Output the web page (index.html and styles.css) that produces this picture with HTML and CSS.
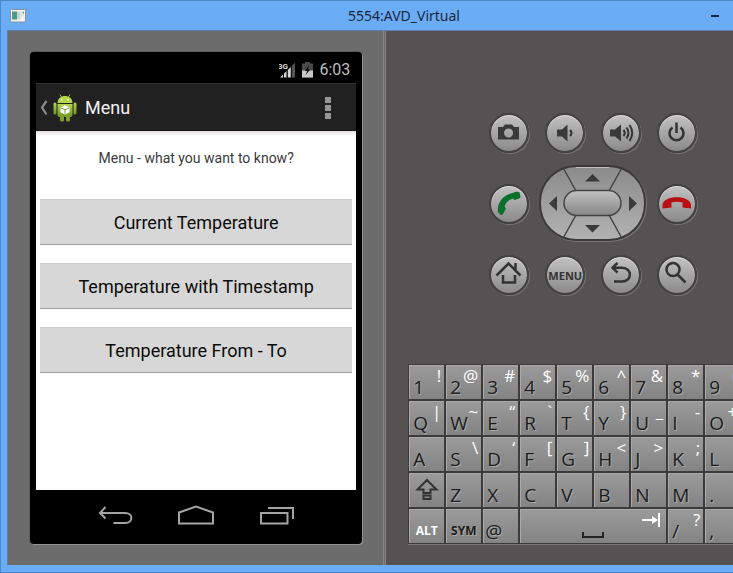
FILE: index.html
```html
<!DOCTYPE html>
<html lang="en">
<head>
<meta charset="utf-8">
<title>5554:AVD_Virtual</title>
<link rel="stylesheet" href="styles.css">
</head>
<body>
<div class="window">
  <header class="titlebar">
    <svg class="app-icon" width="16" height="14" viewBox="0 0 16 14" aria-hidden="true">
      <rect x=".5" y=".5" width="15" height="12.500" rx="1" fill="#f4f4f2" stroke="#8a9098"/>
      <rect x="2" y="2.500" width="5" height="8" fill="#4c9a8c"/>
      <rect x="7" y="2.500" width="3.500" height="8" fill="#c9d6d2"/>
      <rect x="11" y="2.500" width="3" height="5" fill="#dfe6e4"/>
      <path d="M12 3l2 2V2.500z" fill="#5aa090"/>
    </svg>
    <h1 class="title">5554:AVD_Virtual</h1>
    <button class="minimize" type="button" aria-label="Minimize"><span></span></button>
  </header>

  <main class="stage">
    <section class="device-pane">
      <div class="phone">
        <div class="status-bar">
          <svg width="17" height="18" viewBox="0 0 17 18" aria-hidden="true">
            <path d="M1 16.500L4 13.500V16.500zM5 12.500L7.500 10V16.500H5zM8.800 9L11.800 6V16.500H8.800z" fill="#d5d5d5"/>
            <path d="M12.800 5L16 1.500V16.500H12.800z" fill="#555"/>
            <text x="-1" y="8" class="net-label">3G</text>
          </svg>
          <svg width="11" height="16" viewBox="0 0 11 16" aria-hidden="true">
            <path d="M0 1.500H3V0H8V1.500H11V15.500H0z" fill="#4b4b4b"/>
            <path d="M0 8.500H11V15.500H0z" fill="#c8c8c8"/>
            <path d="M7.500 3L3 8.500L5.200 9.200L3.500 13L8.200 7.800L6 7z" fill="#111"/>
          </svg>
          <span class="clock">6:03</span>
        </div>
        <div class="action-bar">
          <button class="up-button" type="button" aria-label="Navigate up">
            <svg width="8" height="16" viewBox="0 0 8 16" aria-hidden="true"><path d="M6.500 1L2 7.500L6.500 14.500" fill="none" stroke="#8b8b8b" stroke-width="2.200"/></svg>
            <svg width="24" height="30" viewBox="0 0 24 30" aria-hidden="true">
              <defs><linearGradient id="droid" x1="0" y1="0" x2="0" y2="1"><stop offset="0" stop-color="#b3d64a"/><stop offset="1" stop-color="#6f9420"/></linearGradient></defs>
              <path d="M7 1.500L8.800 4.500M17 1.500L15.200 4.500" stroke="#9fc037" stroke-width="1"/>
              <path d="M4.500 10C4.500 0.500 19.500 0.500 19.500 10z" fill="#b3d64a"/>
              <circle cx="8.800" cy="6.800" r=".8" fill="#fff"/><circle cx="15.200" cy="6.800" r=".8" fill="#fff"/>
              <rect x="0.500" y="9.500" width="3" height="12" rx="1.500" fill="url(#droid)"/>
              <rect x="20.500" y="9.500" width="3" height="12" rx="1.500" fill="url(#droid)"/>
              <path d="M4.500 11H19.500V22Q19.500 24 17.500 24H6.500Q4.500 24 4.500 22z" fill="url(#droid)"/>
              <rect x="7" y="22" width="4" height="6.500" rx="1.500" fill="#7ea128"/>
              <rect x="13" y="22" width="4" height="6.500" rx="1.500" fill="#7ea128"/>
              <path d="M12 12.300L16.500 14.500V19.300L12 21.700L7.500 19.300V14.500z" fill="#fff"/>
              <path d="M7.800 14.800L12 16.800L16.200 14.800M12 16.800V21.500" fill="none" stroke="#7d9f2e" stroke-width="1"/>
            </svg>
            <span>Menu</span>
          </button>
          <button class="overflow" type="button" aria-label="More options"><i></i><i></i><i></i></button>
        </div>
        <div class="content">
          <p class="prompt">Menu - what you want to know?</p>
          <button class="choice" type="button">Current Temperature</button>
          <button class="choice" type="button">Temperature with Timestamp</button>
          <button class="choice" type="button">Temperature From - To</button>
        </div>
        <nav class="nav-bar">
          <button type="button" aria-label="Back"><svg width="36" height="22" viewBox="0 0 36 22"><path d="M8.500 2L3 8L8.500 13.500M3 8H28C36.500 8 36.500 18 28 18H16.500"/></svg></button>
          <button type="button" aria-label="Home"><svg width="38" height="22" viewBox="0 0 38 22"><path d="M2 7.500L19 1.500L36 7.500V18.500H2z"/></svg></button>
          <button type="button" aria-label="Recent apps"><svg width="36" height="22" viewBox="0 0 36 22"><path d="M2 8H28.500V18.500H2zM9 3H34V14"/></svg></button>
        </nav>
      </div>
    </section>

    <section class="control-pane">
      <div class="hardware">
        <button class="round" type="button" aria-label="Camera"><svg viewBox="0 0 40 40"><path class="ink" fill-rule="evenodd" d="M9 14H14L16 11.500H23L25 14H30V26.500H9zM19.500 15.500a4.500 4.500 0 1 0 .1 0z"/></svg></button>
        <button class="round" type="button" aria-label="Volume down"><svg viewBox="0 0 40 40"><path class="ink" d="M12 16.500H17L22.500 11.500V28.500L17 23.500H12z"/><path class="line" d="M25 17Q28 20 25 23"/></svg></button>
        <button class="round" type="button" aria-label="Volume up"><svg viewBox="0 0 40 40"><path class="ink" d="M9 16.500H14L20 11.500V28.500L14 23.500H9z"/><path class="line" d="M22.500 17Q25 20 22.500 23M25.500 14.500Q29.500 20 25.500 25.500M28.500 12Q34 20 28.500 28"/></svg></button>
        <button class="round" type="button" aria-label="Power"><svg viewBox="0 0 40 40"><path class="line heavy" d="M15.500 14.500A7 7 0 1 0 23.500 14.500M19.500 9.500V20"/></svg></button>

        <button class="round" type="button" aria-label="Call"><svg viewBox="0 0 40 40"><path fill="#08702b" d="M23.500 9Q29 7 30.500 8.500L31.500 12.500Q31.500 14 30 14.500L25.500 16L23.500 14.500Q17 17 15.500 22.500L17 24.500L14 30Q13 31.500 11 30.500L8.700 27.500C8.500 19 13 11.500 23.500 9z"/></svg></button>
        <div class="dpad" role="group" aria-label="Direction pad">
          <svg width="108" height="78" viewBox="0 0 108 78">
            <defs>
              <linearGradient id="pad" x1="0" y1="0" x2="0" y2="1"><stop offset="0" stop-color="#8b8b8b"/><stop offset="1" stop-color="#b2b2b2"/></linearGradient>
              <linearGradient id="pill" x1="0" y1="0" x2="0" y2="1"><stop offset="0" stop-color="#c2c2c2"/><stop offset="1" stop-color="#858585"/></linearGradient>
            </defs>
            <rect x="1" y="1" width="107" height="76" rx="37" fill="#777576"/>
            <rect x="0" y="0" width="107" height="76" rx="37" fill="#3b393a"/>
            <rect x="2" y="2" width="103" height="72" rx="35" fill="url(#pad)"/>
            <path d="M37 2.500H70" fill="none" stroke="#bcbcbc"/>
            <path d="M24.500 3.500L37 26M82.500 3.500L70 26M37 50L24.500 72.500M70 50L82.500 72.500" stroke="#454344" stroke-width="1.500"/>
            <rect x="25" y="25.500" width="57" height="25" rx="12.500" fill="url(#pill)" stroke="#454344" stroke-width="1.500"/>
            <path class="ink" d="M46 16.500L53.500 9L61 16.500zM46 60L53.500 67.500L61 60zM18 31L10 38.500L18 46zM90 31L98 38.500L90 46z"/>
          </svg>
        </div>
        <button class="round" type="button" aria-label="End call"><svg viewBox="0 0 40 40"><path fill="#b90f14" d="M5.500 21C6 10.500 33.500 10.500 34 21V24.500L25.500 23.500V18.500Q20 17 14.500 18.500V23.500L5.500 24.500z"/></svg></button>

        <button class="round" type="button" aria-label="Home"><svg viewBox="0 0 40 40"><path class="line heavy" d="M7.500 20.500L19.500 8.500L31.500 20.500M26.500 8V14.500M14 20V27.500H26V20"/></svg></button>
        <button class="round menu" type="button">MENU</button>
        <button class="round" type="button" aria-label="Back"><svg viewBox="0 0 40 40"><path class="line heavy" d="M16.500 8L11.500 12.700L16.500 17.500M11.500 12.700H21C31.500 12.700 31.500 26.500 21 26.500H13"/></svg></button>
        <button class="round" type="button" aria-label="Search"><svg viewBox="0 0 40 40"><circle class="line heavy" cx="16" cy="14.500" r="6.500"/><path class="line heavy" d="M20.500 19.500L28.500 27.500"/></svg></button>
      </div>

      <div class="keyboard">
        <button class="key" type="button">1<sup>!</sup></button><button class="key" type="button">2<sup>@</sup></button><button class="key" type="button">3<sup>#</sup></button><button class="key" type="button">4<sup>$</sup></button><button class="key" type="button">5<sup>%</sup></button><button class="key" type="button">6<sup>^</sup></button><button class="key" type="button">7<sup>&amp;</sup></button><button class="key" type="button">8<sup>*</sup></button><button class="key" type="button">9<sup>(</sup></button>
        <button class="key" type="button">Q<sup>|</sup></button><button class="key" type="button">W<sup>~</sup></button><button class="key" type="button">E<sup>“</sup></button><button class="key" type="button">R<sup>`</sup></button><button class="key" type="button">T<sup>{</sup></button><button class="key" type="button">Y<sup>}</sup></button><button class="key" type="button">U<sup>_</sup></button><button class="key" type="button">I<sup>-</sup></button><button class="key" type="button">O<sup>+</sup></button>
        <button class="key" type="button">A</button><button class="key" type="button">S<sup>\</sup></button><button class="key" type="button">D<sup>‘</sup></button><button class="key" type="button">F<sup>[</sup></button><button class="key" type="button">G<sup>]</sup></button><button class="key" type="button">H<sup>&lt;</sup></button><button class="key" type="button">J<sup>&gt;</sup></button><button class="key" type="button">K<sup>;</sup></button><button class="key" type="button">L</button>
        <button class="key icon-key" type="button" aria-label="Shift"><svg width="24" height="24" viewBox="0 0 24 24"><path class="line" d="M12 2L21.500 11.500H15.500V15H8.500V11.500H2.500zM8.500 17.500H15.500V21H8.500z"/></svg></button><button class="key" type="button">Z</button><button class="key" type="button">X</button><button class="key" type="button">C</button><button class="key" type="button">V</button><button class="key" type="button">B</button><button class="key" type="button">N</button><button class="key" type="button">M</button><button class="key" type="button">.</button>
        <button class="key word alt" type="button">ALT</button><button class="key word" type="button">SYM</button><button class="key at" type="button">@</button><button class="key space" type="button" aria-label="Space"><svg width="22" height="8" viewBox="0 0 22 8"><path d="M1 1V6H21V1" fill="none" stroke="#222" stroke-width="2"/></svg><svg class="tab" width="18" height="14" viewBox="0 0 18 14"><path d="M0 7H13M17 0V14" stroke="#fff" stroke-width="2"/><path d="M10 3L16 7L10 11z" fill="#fff"/></svg></button><button class="key" type="button">/<sup>?</sup></button><button class="key" type="button">,</button>
      </div>
    </section>
  </main>
</div>
</body>
</html>
```
FILE: styles.css
```css
* { box-sizing: border-box; }

body { margin: 0; font-family: "Open Sans", "Noto Sans", sans-serif; }

button {
  margin: 0;
  padding: 0;
  border: 0;
  background: none;
  color: inherit;
  font: inherit;
}

svg { display: block; flex: none; }

.window {
  display: flex;
  flex-direction: column;
  min-height: 100vh;
  overflow: hidden;
  border: 1px solid #4b87c9;
  border-right: 0;
  background: #6bacf6;
}

.titlebar {
  display: flex;
  align-items: center;
  height: 29px;
  padding: 0 10px 0 9px;
}

.title {
  flex: 1;
  margin: 0 0 0 75px;
  text-align: center;
  font: 400 14px/20px "Noto Sans", sans-serif;
  color: #17283e;
}

.minimize { padding: 8px 4px; }
.minimize span { display: block; width: 8px; height: 2px; background: #14233a; }

.stage {
  flex: 1;
  display: grid;
  grid-template-columns: minmax(0, 12fr) minmax(0, 11fr);
  margin: 0 0 7px 6px;
  border: 1px solid #5b7fa8;
  border-width: 1px 0 0 1px;
}

.device-pane {
  display: flex;
  padding: 21px 21px 21px 22px;
  background: #6c6c6c;
  border-right: 3px double #858585;
}

.phone {
  flex: 1;
  display: flex;
  flex-direction: column;
  min-width: 0;
  padding: 0 6px;
  border-radius: 4px;
  background: #000;
  box-shadow: 1px 1px 0 #929292, 0 0 0 1px #5c5c5c;
  font-family: Roboto, sans-serif;
}

.status-bar {
  display: flex;
  align-items: center;
  justify-content: flex-end;
  gap: 6px;
  height: 31px;
  padding: 5px 6px 0 0;
}
.clock { font-size: 16px; line-height: 20px; color: #bdbdbd; }
.net-label { font: 700 8px Roboto, sans-serif; fill: #d5d5d5; }

.action-bar {
  display: flex;
  align-items: center;
  justify-content: space-between;
  height: 48px;
  padding: 1px 25px 0 4px;
  background: #212121;
  border-top: 1px solid #303030;
  border-bottom: 1px solid #171717;
}
.up-button {
  display: flex;
  align-items: center;
  gap: 5px;
  font-size: 18px;
  line-height: 24px;
  color: #f3f3f3;
}
.up-button span { padding-left: 3px; }
.overflow { display: grid; gap: 2px; }
.overflow i { width: 6px; height: 6px; background: #969696; }

.content {
  flex: 1;
  display: flex;
  flex-direction: column;
  gap: 18px;
  padding: 18px 4px;
  background: linear-gradient(#e6dfe0, #fff 5px);
}
.prompt {
  margin: 0 0 14px;
  text-align: center;
  font-size: 14px;
  line-height: 18px;
  color: #3a3a3a;
}
.choice {
  height: 46px;
  background: #d7d7d7;
  border-top: 1px solid #cdcdcd;
  border-bottom: 1px solid #9c9c9c;
  font-size: 18px;
  color: #0c0c0c;
}

.nav-bar {
  display: flex;
  align-items: center;
  justify-content: center;
  gap: 44px;
  height: 54px;
  padding-bottom: 2px;
}
.nav-bar path { fill: none; stroke: #a4a4a4; stroke-width: 2; }

.control-pane {
  display: flex;
  flex-direction: column;
  justify-content: space-between;
  align-items: flex-start;
  overflow: hidden;
  padding: 82px 0 21px 22px;
  background: #545253;
}

.hardware {
  display: grid;
  grid-template-columns: repeat(4, 40px);
  gap: 12px 16px;
  align-items: center;
  margin-left: 81px;
}
.round {
  width: 40px;
  height: 40px;
  border: 2px solid #434142;
  border-radius: 50%;
  background: linear-gradient(#c2c2c2, #8a8a8a) padding-box;
  box-shadow: 1px 1px 0 #777576, inset 0 1px 1px #dedede;
}
.round svg { width: 40px; height: 40px; margin: -2px; }
.menu { font-size: 11px; font-weight: 700; color: #333; display: flex; align-items: center; justify-content: center; }
.dpad { grid-column: 2 / 4; margin: 0 -6px; }

.ink { fill: #3a3a3a; }
.line { fill: none; stroke: #333; stroke-width: 2; }
.round .heavy { stroke-width: 2.500; }

.keyboard {
  display: grid;
  grid-template-columns: repeat(9, 35px);
  grid-auto-rows: 34px;
  gap: 2px;
  padding: 1px;
  background: #3c3a3b;
  box-shadow: 0 1px 0 #777576;
}
.key {
  position: relative;
  padding: 10px 0 0 4px;
  text-align: left;
  font-size: 19px;
  line-height: 22px;
  color: #1c1c1c;
  text-shadow: 1px 1px 0 #a9a9a9;
  background: linear-gradient(#9b9b9b, #838383);
  box-shadow: inset 1px 1px 0 #a9a9a9;
}
.key sup {
  position: absolute;
  top: 1px;
  right: 3px;
  font-size: 17px;
  line-height: 20px;
  color: #fff;
  text-shadow: none;
}
.icon-key { display: grid; place-items: center; padding: 0; }
.key.word { padding-left: 0; text-align: center; font-size: 12px; font-weight: 700; }
.alt { color: #fff; text-shadow: none; }
.key.at { padding-left: 2px; }
.key.space { grid-column: span 4; display: grid; justify-content: center; align-content: end; padding: 0 0 4px; }
.tab { position: absolute; top: 4px; right: 6px; }
```
